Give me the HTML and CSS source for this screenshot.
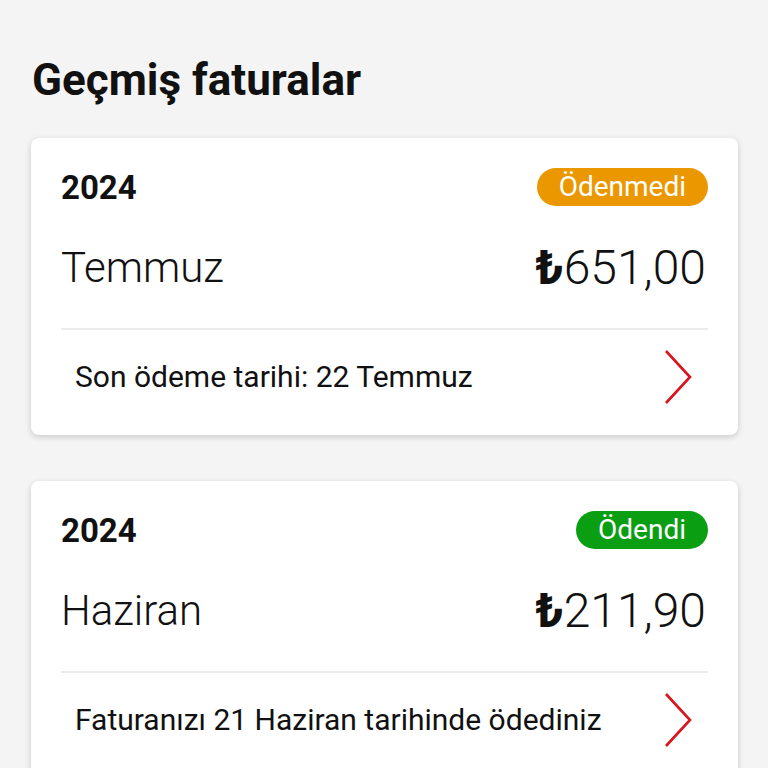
FILE: index.html
```html
<!DOCTYPE html>
<html>
<head>
	<title>Geçmiş faturalar</title>
	<link rel="stylesheet" href="styles.css">
</head>
<body>
	<div class="page">
		<h1>Geçmiş faturalar</h1>

		<div class="card">
			<div class="card-top">
				<span class="year">2024</span>
				<span class="badge badge-unpaid">Ödenmedi</span>
			</div>
			<div class="card-main">
				<span class="month">Temmuz</span>
				<span class="amount"><b>₺</b>651,00</span>
			</div>
			<div class="card-foot">
				<span>Son ödeme tarihi: 22 Temmuz</span>
				<svg class="chevron" width="28" height="54" viewBox="0 0 28 54"><path d="M2 1 L26 27 L2 53" fill="none" stroke="#d8141c" stroke-width="2.6"/></svg>
			</div>
		</div>

		<div class="card">
			<div class="card-top">
				<span class="year">2024</span>
				<span class="badge badge-paid">Ödendi</span>
			</div>
			<div class="card-main">
				<span class="month">Haziran</span>
				<span class="amount"><b>₺</b>211,90</span>
			</div>
			<div class="card-foot">
				<span>Faturanızı 21 Haziran tarihinde ödediniz</span>
				<svg class="chevron" width="28" height="54" viewBox="0 0 28 54"><path d="M2 1 L26 27 L2 53" fill="none" stroke="#d8141c" stroke-width="2.6"/></svg>
			</div>
		</div>
	</div>
</body>
</html>
```

FILE: styles.css
```css
body {
	margin: 0;
	background: #f4f4f4;
	font-family: Roboto, "Noto Sans", sans-serif;
	color: #111;
}

.page {
	padding: 52px 30px 0 31px;
}

h1 {
	margin: 0 0 30px 1px;
	font-size: 44px;
	font-weight: 700;
	line-height: 56px;
}

.card {
	background: #fff;
	border-radius: 8px;
	box-shadow: 0 2px 6px rgba(0, 0, 0, 0.18);
	padding: 30px 30px 0;
	margin-bottom: 46px;
}

.card-top {
	display: flex;
	justify-content: space-between;
	align-items: center;
	height: 38px;
}

.year {
	font-size: 33px;
	font-weight: 700;
}

.badge {
	height: 38px;
	line-height: 38px;
	border-radius: 19px;
	padding: 0 22px;
	color: #fff;
	font-size: 28px;
}

.badge-unpaid {
	background: #eb9700;
}

.badge-paid {
	background: #0a9e12;
}

.card-main {
	display: flex;
	justify-content: space-between;
	align-items: center;
	height: 122px;
	border-bottom: 2px solid #ebebeb;
}

.month {
	font-size: 42px;
	font-weight: 300;
}

.amount {
	font-size: 48px;
	font-weight: 300;
	padding-right: 2px;
}

.amount b {
	font-weight: 700;
}

.card-foot {
	display: flex;
	justify-content: space-between;
	align-items: center;
	height: 93px;
	padding: 0 16px 12px 14px;
	font-size: 30px;
}
```
